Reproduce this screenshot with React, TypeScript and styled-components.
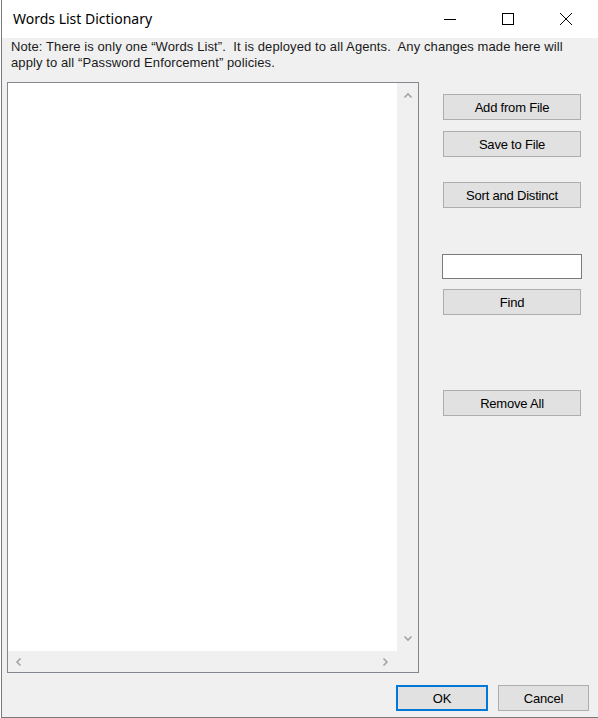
import React from 'react';
import styled, { createGlobalStyle } from 'styled-components';

const GlobalStyle = createGlobalStyle`
  html, body {
    margin: 0;
    padding: 0;
    background: #ffffff;
  }
  #root {
    width: 598px;
    height: 718px;
  }
`;

const Window = styled.div`
  box-sizing: border-box;
  width: 598px;
  height: 718px;
  margin-left: 1px;
  border-left: 1px solid #7a7a7a;
  border-right: 1px solid #7a7a7a;
  border-bottom: 1px solid #7a7a7a;
  background: #f0f0f0;
  display: flex;
  flex-direction: column;
  font-family: 'Liberation Sans', Arial, sans-serif;
  color: #000;
`;

const TitleBar = styled.div`
  height: 38px;
  background: #ffffff;
  display: flex;
  align-items: center;
  padding-right: 3px;
`;

const Title = styled.div`
  flex: 1;
  padding-left: 11px;
  font-family: 'Noto Sans', 'Open Sans', sans-serif;
  font-size: 14px;
  padding-bottom: 1px;
`;

const CaptionButton = styled.div`
  width: 58px;
  height: 38px;
  display: flex;
  align-items: center;
  justify-content: center;
`;

const Client = styled.div`
  flex: 1;
  display: flex;
  flex-direction: column;
`;

const Note = styled.div`
  padding: 1px 0 0 9px;
  font-size: 13px;
  line-height: 16px;
  height: 43px;
  letter-spacing: 0.1px;
  color: #1a1a1a;
`;

const Body = styled.div`
  display: flex;
  padding-left: 5px;
`;

const ListBox = styled.div`
  width: 412px;
  height: 591px;
  box-sizing: border-box;
  border: 1px solid #828790;
  display: grid;
  grid-template-columns: 1fr 21px;
  grid-template-rows: 1fr 21px;
  background: #ffffff;
`;

const ListContent = styled.div`
  background: #ffffff;
`;

const VScroll = styled.div`
  background: #f0f0f0;
  display: flex;
  flex-direction: column;
  justify-content: space-between;
  align-items: center;
  padding: 8px 0 8px;
`;

const HScroll = styled.div`
  background: #f0f0f0;
  display: flex;
  justify-content: space-between;
  align-items: center;
  padding: 0 7px 0 6px;
`;

const Corner = styled.div`
  background: #f0f0f0;
`;

const Side = styled.div`
  display: flex;
  flex-direction: column;
  padding-left: 24px;
  padding-top: 12px;
`;

const Button = styled.button<{ $top: number; $default?: boolean; $w?: number }>`
  box-sizing: border-box;
  margin-top: ${(p) => p.$top}px;
  width: ${(p) => p.$w ?? 138}px;
  height: 26px;
  padding: 0;
  background: #e1e1e1;
  border: ${(p) => (p.$default ? '2px solid #0078d7' : '1px solid #adadad')};
  font-family: 'Liberation Sans', Arial, sans-serif;
  font-size: 13px;
  letter-spacing: -0.2px;
  color: #000;
`;

const TextBox = styled.div`
  box-sizing: border-box;
  margin-top: 46px;
  margin-left: -1px;
  width: 140px;
  height: 25px;
  background: #ffffff;
  border: 1px solid #7a7a7a;
`;

const Footer = styled.div`
  display: flex;
  justify-content: flex-end;
  gap: 10px;
  padding-right: 9px;
`;

const Chevron = ({ dir }: { dir: 'up' | 'down' | 'left' | 'right' }) => {
  const rot = { up: 0, right: 90, down: 180, left: 270 }[dir];
  return (
    <svg width="10" height="10" viewBox="0 0 10 10" style={{ transform: `rotate(${rot}deg)` }}>
      <path d="M1.5 6.5 L5 3 L8.5 6.5" fill="none" stroke="#a3a3a3" strokeWidth="1.6" />
    </svg>
  );
};

export default function App() {
  return (
    <>
      <GlobalStyle />
      <Window>
        <TitleBar>
          <Title>Words List Dictionary</Title>
          <CaptionButton>
            <svg width="14" height="14" viewBox="0 0 14 14">
              <path d="M1 7.5 H13" stroke="#000" strokeWidth="1" />
            </svg>
          </CaptionButton>
          <CaptionButton>
            <svg width="14" height="14" viewBox="0 0 14 14">
              <rect x="1.5" y="1.5" width="11" height="11" fill="none" stroke="#000" strokeWidth="1" />
            </svg>
          </CaptionButton>
          <CaptionButton>
            <svg width="14" height="14" viewBox="0 0 14 14">
              <path d="M1 1 L13 13 M13 1 L1 13" stroke="#000" strokeWidth="1" />
            </svg>
          </CaptionButton>
        </TitleBar>
        <Client>
          <Note>
            Note: There is only one “Words List”.&nbsp; It is deployed to all Agents.&nbsp; Any changes made here will
            <br />
            apply to all “Password Enforcement” policies.
          </Note>
          <Body>
            <ListBox>
              <ListContent />
              <VScroll>
                <Chevron dir="up" />
                <Chevron dir="down" />
              </VScroll>
              <HScroll>
                <Chevron dir="left" />
                <Chevron dir="right" />
              </HScroll>
              <Corner />
            </ListBox>
            <Side>
              <Button $top={0}>Add from File</Button>
              <Button $top={11}>Save to File</Button>
              <Button $top={25}>Sort and Distinct</Button>
              <TextBox />
              <Button $top={10}>Find</Button>
              <Button $top={75}>Remove All</Button>
            </Side>
          </Body>
          <Footer>
            <Button $top={12} $w={92} $default>OK</Button>
            <Button $top={12} $w={91}>Cancel</Button>
          </Footer>
        </Client>
      </Window>
    </>
  );
}
